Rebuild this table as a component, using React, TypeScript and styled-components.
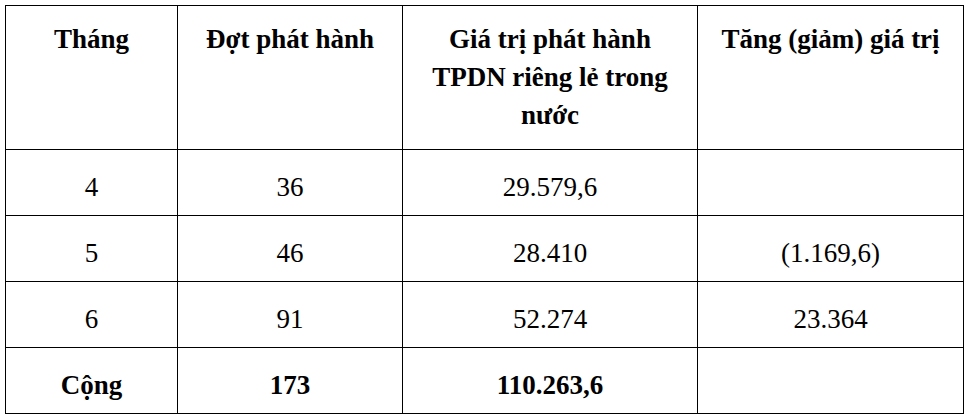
import { createGlobalStyle, styled } from 'styled-components';

const serif = '"Liberation Serif", "Times New Roman", Tinos, serif';

const GlobalStyle = createGlobalStyle`
  body {
    margin: 0;
    font-family: ${serif};
  }
  table, th, td {
    font-family: ${serif} !important;
  }
`;

const Page = styled.div`
  padding: 5px 0 0 5px;
`;

const Table = styled.table`
  border-collapse: collapse;
  table-layout: fixed;
  width: 958px;
  font-family: ${serif} !important;
`;

const HeadCell = styled.th<{ $pad?: number }>`
  box-sizing: border-box;
  border: 1px solid #000;
  height: 144px;
  padding: 14px ${({ $pad = 16 }) => $pad}px 0;
  vertical-align: top;
  text-align: center;
  font-family: ${serif} !important;
  font-size: 27px;
  font-weight: 700;
  line-height: 38px;
`;

const Cell = styled.td<{ $bold?: boolean }>`
  box-sizing: border-box;
  border: 1px solid #000;
  height: 66px;
  padding: 8px 16px 0;
  vertical-align: middle;
  text-align: center;
  font-family: ${serif} !important;
  font-size: 27px;
  font-weight: ${({ $bold }) => ($bold ? 700 : 400)};
  line-height: 32px;
`;

const rows = [
  ['4', '36', '29.579,6', ''],
  ['5', '46', '28.410', '(1.169,6)'],
  ['6', '91', '52.274', '23.364'],
];

const widths = [172, 225, 295, 266];

const App = () => {
  return (
    <Page>
      <GlobalStyle />
      <Table>
        <colgroup>
          {widths.map((w) => (
            <col key={w} style={{ width: w }} />
          ))}
        </colgroup>
        <thead>
          <tr>
            <HeadCell>Tháng</HeadCell>
            <HeadCell>Đợt phát hành</HeadCell>
            <HeadCell>Giá trị phát hành TPDN riêng lẻ trong nước</HeadCell>
            <HeadCell $pad={20}>Tăng (giảm) giá trị</HeadCell>
          </tr>
        </thead>
        <tbody>
          {rows.map((row) => (
            <tr key={row[0]}>
              {row.map((value, i) => (
                <Cell key={i}>{value}</Cell>
              ))}
            </tr>
          ))}
          <tr>
            <Cell $bold>Cộng</Cell>
            <Cell $bold>173</Cell>
            <Cell $bold>110.263,6</Cell>
            <Cell $bold />
          </tr>
        </tbody>
      </Table>
    </Page>
  );
};

export default App;
